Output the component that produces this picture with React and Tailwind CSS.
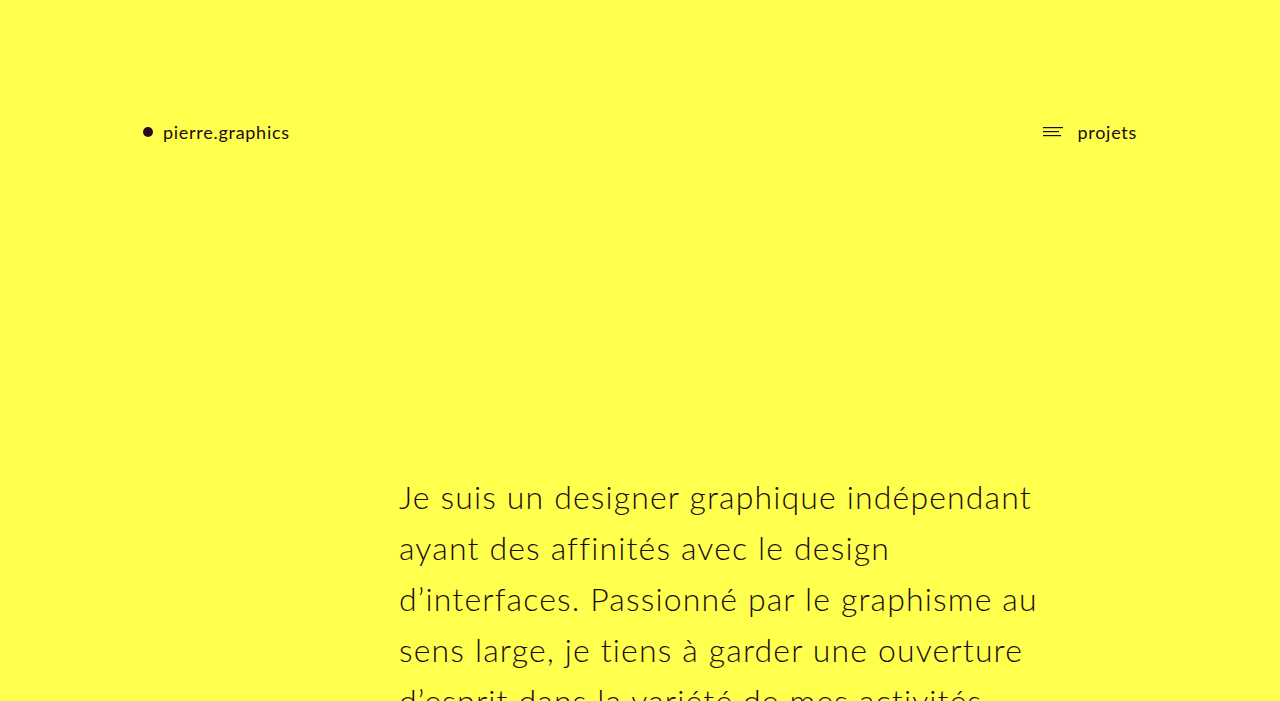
import React from "react";

export default function App() {
  return (
    <div
      className="min-h-screen w-full overflow-hidden bg-[#ffff4d] text-[#1c0c14]"
      style={{ fontFamily: "Lato, 'Liberation Sans', sans-serif" }}
    >
      <div className="mx-[143px] pt-[120px]">
        <header className="flex h-[24px] items-center justify-between">
          <a href="#" className="flex items-center gap-[10px] text-[18px] leading-none tracking-[0.04em]">
            <span className="h-[10px] w-[10px] rounded-full bg-[#2a0a1c]" />
            <span>pierre.graphics</span>
          </a>
          <a href="#" className="flex items-center gap-[14px] text-[18px] leading-none tracking-[0.04em]">
            <svg width="20" height="12" viewBox="0 0 20 12" className="mt-[2px]">
              <rect x="0" y="0" width="20" height="1.2" fill="#1c0c14" />
              <rect x="0" y="4" width="16" height="1.2" fill="#1c0c14" />
              <rect x="0" y="8" width="18" height="1.2" fill="#1c0c14" />
            </svg>
            <span>projets</span>
          </a>
        </header>

        <main className="mt-[327px] pl-[256px]">
          <p className="max-w-[655px] text-[32px] font-light leading-[51px] tracking-[0.036em]">
            Je suis un designer graphique indépendant ayant des affinités avec le design
            d’interfaces. Passionné par le graphisme au sens large, je tiens à garder une
            ouverture d’esprit dans la variété de mes activités.
          </p>
        </main>
      </div>
    </div>
  );
}
